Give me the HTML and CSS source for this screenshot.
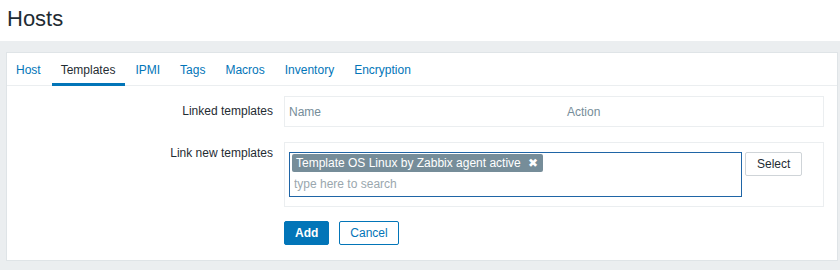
FILE: index.html
```html
<!DOCTYPE html>
<html lang="en">
<head>
    <meta charset="utf-8">
    <title>Hosts</title>
    <link rel="stylesheet" href="styles.css">
</head>
<body>
    <div class="header-title">
        <h1>Hosts</h1>
    </div>
    <div class="wrapper">
        <div class="form-panel">
            <ul class="tabs">
                <li><a href="#">Host</a></li>
                <li class="tab-active"><a href="#">Templates</a></li>
                <li><a href="#">IPMI</a></li>
                <li><a href="#">Tags</a></li>
                <li><a href="#">Macros</a></li>
                <li><a href="#">Inventory</a></li>
                <li><a href="#">Encryption</a></li>
            </ul>
            <div class="form-grid">
                <label class="form-label label-linked">Linked templates</label>
                <div class="field-box linked-box">
                    <span class="col-name">Name</span>
                    <span class="col-action">Action</span>
                </div>

                <label class="form-label label-new">Link new templates</label>
                <div class="field-box link-box">
                    <div class="multiselect">
                        <div class="ms-tags">
                            <span class="ms-tag">Template OS Linux by Zabbix agent active <span class="ms-remove">&#10006;</span></span>
                        </div>
                        <input class="ms-input" type="text" placeholder="type here to search">
                    </div>
                    <button class="btn-grey">Select</button>
                </div>

                <div></div>
                <div class="form-buttons">
                    <button class="btn-main">Add</button>
                    <button class="btn-alt">Cancel</button>
                </div>
            </div>
        </div>
    </div>
</body>
</html>
```

FILE: styles.css
```css
body {
    margin: 0;
    font-family: "Liberation Sans", Arial, sans-serif;
    font-size: 12px;
    color: #1f2c33;
    background-color: #ebeef0;
}
.header-title {
    background-color: #ffffff;
    height: 41px;
    padding: 0 7px;
}
.header-title h1 {
    margin: 0;
    padding-top: 6px;
    font-size: 22px;
    font-weight: normal;
    line-height: 26px;
    color: #1f2c33;
}
.wrapper {
    padding: 11px 2px 10px 6px;
}
.form-panel {
    background-color: #ffffff;
    border: 1px solid #dfe4e7;
    height: 209px;
    box-sizing: border-box;
}
.tabs {
    list-style: none;
    margin: 0;
    padding: 0;
    display: flex;
    border-bottom: 1px solid #ebeef0;
    height: 32px;
}
.tabs li {
    display: flex;
    align-items: center;
    padding: 0 10px 0 9px;
    border-bottom: 3px solid transparent;
    margin-bottom: -1px;
    margin-right: 1px;
}
.tabs a {
    color: #0275b8;
    text-decoration: none;
    padding-top: 3px;
}
.tabs .tab-active {
    border-bottom-color: #0275b8;
}
.tabs .tab-active a {
    color: #1f2c33;
}
.form-grid {
    display: grid;
    grid-template-columns: 266px 540px;
    column-gap: 11px;
    row-gap: 15px;
    padding-top: 10px;
}
.form-label {
    text-align: right;
}
.label-linked {
    padding-top: 8px;
}
.label-new {
    padding-top: 4px;
}
.field-box {
    border: 1px solid #ebeef0;
    box-sizing: border-box;
}
.linked-box {
    height: 31px;
    display: flex;
    align-items: center;
    color: #768d99;
}
.col-name {
    padding-left: 4px;
    width: 278px;
}
.link-box {
    height: 65px;
    padding: 9px 4px;
    display: flex;
    align-items: flex-start;
    gap: 3px;
}
.multiselect {
    width: 453px;
    height: 45px;
    border: 1px solid #1f65a6;
    box-sizing: border-box;
    padding: 1px 2px;
}
.ms-tags {
    display: flex;
}
.ms-tag {
    background-color: #768d99;
    color: #ffffff;
    line-height: 18px;
    padding: 0 5px 0 4px;
    border-radius: 2px;
}
.ms-remove {
    font-size: 12px;
    margin-left: 4px;
}
.ms-input {
    border: none;
    outline: none;
    font-family: inherit;
    font-size: 12px;
    padding: 5px 2px 3px;
    width: 400px;
    color: #1f2c33;
}
.ms-input::placeholder {
    color: #9aa7ae;
}
.btn-grey {
    height: 24px;
    padding: 0 11px;
    border: 1px solid #cfd4d8;
    border-radius: 2px;
    background-color: #ffffff;
    font-family: inherit;
    font-size: 12px;
    color: #1f2c33;
}
.form-buttons {
    display: flex;
    gap: 10px;
    margin-top: -1px;
}
.btn-main {
    height: 24px;
    padding: 0 10px;
    border: 1px solid #0275b8;
    border-radius: 2px;
    background-color: #0275b8;
    color: #ffffff;
    font-family: inherit;
    font-size: 12px;
    font-weight: bold;
}
.btn-alt {
    height: 24px;
    padding: 0 10px;
    border: 1px solid #0275b8;
    border-radius: 2px;
    background-color: #ffffff;
    color: #0275b8;
    font-family: inherit;
    font-size: 12px;
}
```
